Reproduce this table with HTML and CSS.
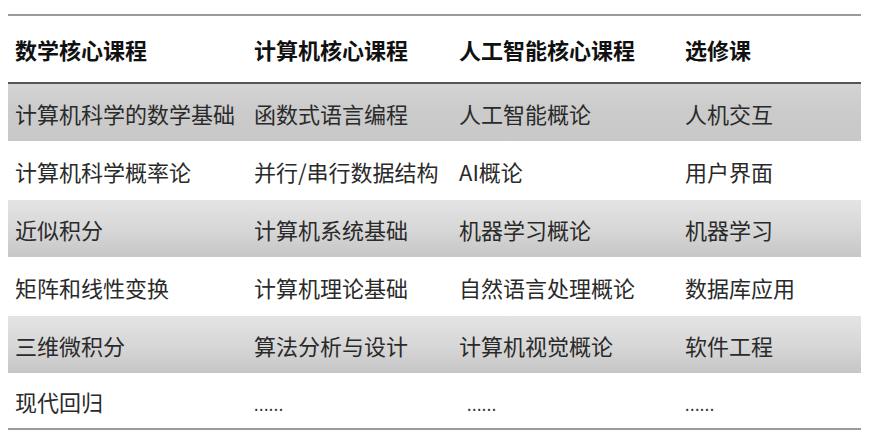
FILE: index.html
```html
<!DOCTYPE html>
<html lang="zh-CN">
<head>
<meta charset="utf-8">
<title>课程表</title>
<link rel="stylesheet" href="styles.css">
</head>
<body>
<div class="table">
  <div class="row head">
    <div class="cell">数学核心课程</div>
    <div class="cell">计算机核心课程</div>
    <div class="cell">人工智能核心课程</div>
    <div class="cell">选修课</div>
  </div>
  <div class="row shade first">
    <div class="cell">计算机科学的数学基础</div>
    <div class="cell">函数式语言编程</div>
    <div class="cell">人工智能概论</div>
    <div class="cell">人机交互</div>
  </div>
  <div class="row plain">
    <div class="cell">计算机科学概率论</div>
    <div class="cell">并行/串行数据结构</div>
    <div class="cell">AI概论</div>
    <div class="cell">用户界面</div>
  </div>
  <div class="row shade">
    <div class="cell">近似积分</div>
    <div class="cell">计算机系统基础</div>
    <div class="cell">机器学习概论</div>
    <div class="cell">机器学习</div>
  </div>
  <div class="row plain">
    <div class="cell">矩阵和线性变换</div>
    <div class="cell">计算机理论基础</div>
    <div class="cell">自然语言处理概论</div>
    <div class="cell">数据库应用</div>
  </div>
  <div class="row shade">
    <div class="cell">三维微积分</div>
    <div class="cell">算法分析与设计</div>
    <div class="cell">计算机视觉概论</div>
    <div class="cell">软件工程</div>
  </div>
  <div class="row plain last">
    <div class="cell">现代回归</div>
    <div class="cell dots">......</div>
    <div class="cell dots indent">......</div>
    <div class="cell dots">......</div>
  </div>
</div>
</body>
</html>
```

FILE: styles.css
```css
html, body {
  margin: 0;
  padding: 0;
  background: #ffffff;
}

body {
  padding: 14px 13px 0 8px;
  font-family: "Noto Sans CJK SC", "Noto Sans", sans-serif;
  color: #2a2a2a;
}

.table {
  width: 853px;
  border-top: 2px solid #9a9a9a;
  border-bottom: 2px solid #9a9a9a;
}

.row {
  display: grid;
  grid-template-columns: 239px 205px 226px 183px;
  align-items: center;
  font-size: 22px;
  line-height: 1;
}

.cell {
  padding-left: 7px;
  white-space: nowrap;
}

.head {
  height: 66px;
  font-weight: 700;
  color: #111111;
  border-bottom: 2px solid #555555;
}

.shade {
  height: 57px;
  background: linear-gradient(to bottom, #e4e4e4 0%, #d6d6d6 55%, #c6c6c6 100%);
}

.shade.first {
  background: linear-gradient(to bottom, #d4d4d4 0%, #cccccc 40%, #c8c8c8 100%);
}

.plain {
  height: 59px;
  background: #ffffff;
}

.plain.last {
  height: 55px;
}

.dots {
  font-size: 16px;
  letter-spacing: 0.5px;
  align-self: end;
  padding-bottom: 16px;
  color: #333333;
}

.indent {
  padding-left: 15px;
}
```
